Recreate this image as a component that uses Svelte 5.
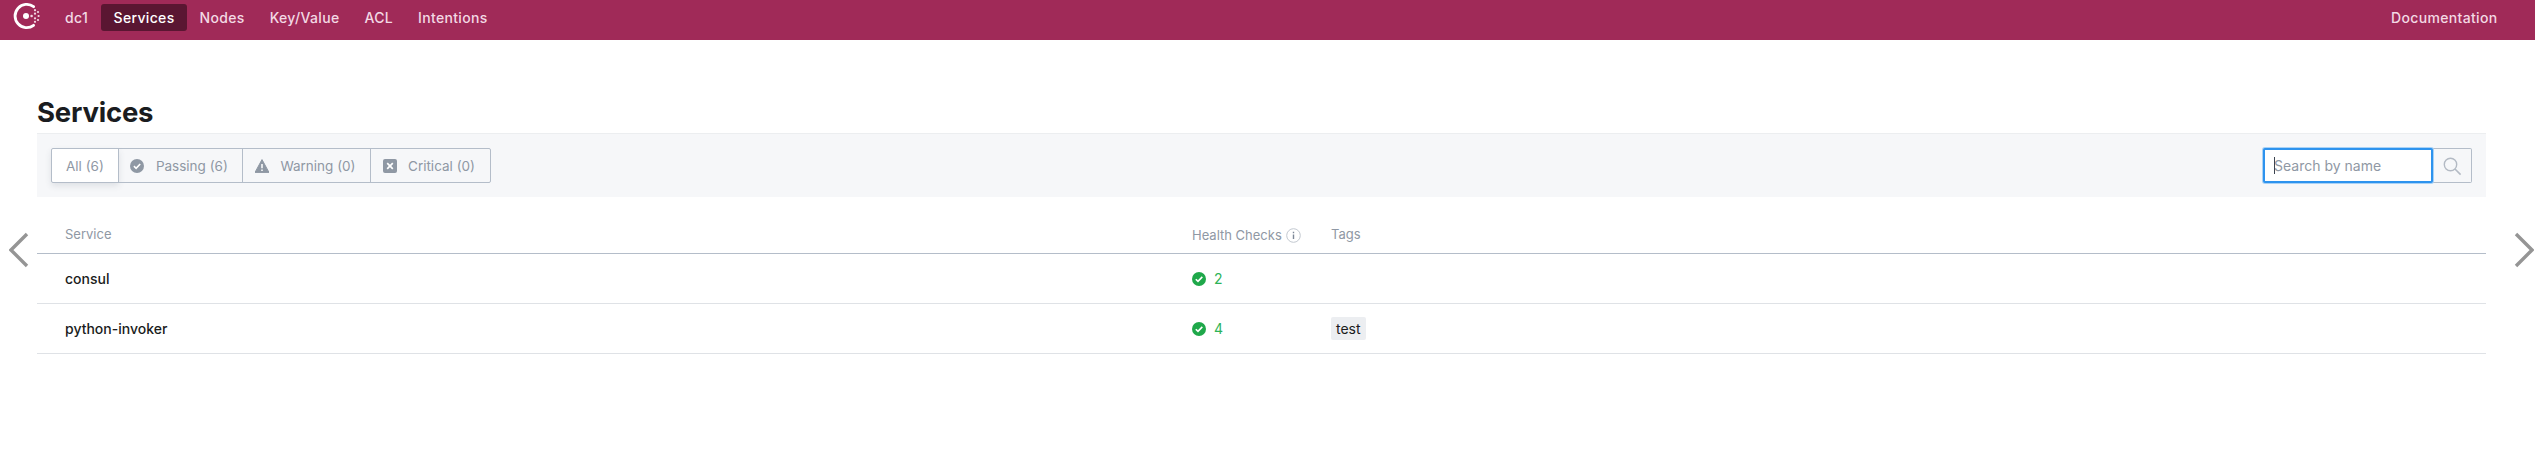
<script>
  const navItems = ['Services', 'Nodes', 'Key/Value', 'ACL', 'Intentions'];
  const filters = [
    { label: 'All (6)', icon: null, active: true },
    { label: 'Passing (6)', icon: 'passing' },
    { label: 'Warning (0)', icon: 'warning' },
    { label: 'Critical (0)', icon: 'critical' }
  ];
  const services = [
    { name: 'consul', checks: 2, tags: [] },
    { name: 'python-invoker', checks: 4, tags: ['test'] }
  ];
</script>

<header class="topbar">
  <svg class="logo" viewBox="0 0 28 28" width="28" height="28" aria-hidden="true">
    <path d="M20.6 3.7A11.6 11.6 0 1 0 20.6 22.3" fill="none" stroke="#fff" stroke-width="2.8" stroke-linecap="round" />
    <circle cx="13" cy="13" r="3" fill="#fff" />
    <circle cx="18.6" cy="13" r="1.3" fill="#f3d9e4" />
    <circle cx="22" cy="7.2" r="1.1" fill="#f3d9e4" />
    <circle cx="25" cy="9" r="1.1" fill="#f3d9e4" />
    <circle cx="22" cy="10.7" r="1.1" fill="#f3d9e4" />
    <circle cx="25.6" cy="13" r="1.1" fill="#f3d9e4" />
    <circle cx="22" cy="15.3" r="1.1" fill="#f3d9e4" />
    <circle cx="25" cy="17" r="1.1" fill="#f3d9e4" />
    <circle cx="22" cy="18.8" r="1.1" fill="#f3d9e4" />
  </svg>
  <span class="dc">dc1</span>
  <nav class="nav">
    {#each navItems as item, i}
      <a class="nav-link" class:current={i === 0} href="#top">{item}</a>
    {/each}
  </nav>
  <a class="nav-link docs" href="#top">Documentation</a>
</header>

<main class="content">
  <h1>Services</h1>

  <div class="filter-bar">
    <div class="filters">
      {#each filters as f}
        <button class="filter" class:active={f.active}>
          {#if f.icon === 'passing'}
            <svg viewBox="0 0 14 14" width="14" height="14" aria-hidden="true">
              <circle cx="7" cy="7" r="7" fill="#8f98a4" />
              <path d="M3.9 7.2 6.1 9.3 10.2 5" fill="none" stroke="#fff" stroke-width="1.6" />
            </svg>
          {:else if f.icon === 'warning'}
            <svg viewBox="0 0 14 14" width="14" height="14" aria-hidden="true">
              <path d="M7 .6 14 13.4H0Z" fill="#8f98a4" stroke="#8f98a4" stroke-linejoin="round" />
              <path d="M7 5v4.2M7 10.4v1.5" stroke="#fff" stroke-width="1.5" />
            </svg>
          {:else if f.icon === 'critical'}
            <svg viewBox="0 0 14 14" width="14" height="14" aria-hidden="true">
              <rect width="14" height="14" rx="2" fill="#8f98a4" />
              <path d="M4.2 4.2 9.8 9.8M9.8 4.2 4.2 9.8" stroke="#fff" stroke-width="1.7" />
            </svg>
          {/if}
          <span>{f.label}</span>
        </button>
      {/each}
    </div>

    <div class="search">
      <div class="search-input"><i class="caret"></i><span>Search by name</span></div>
      <button class="search-btn" aria-label="Search">
        <svg viewBox="0 0 20 20" width="20" height="20" aria-hidden="true">
          <circle cx="8.5" cy="8.5" r="6.2" fill="none" stroke="#b3bac4" stroke-width="1.4" />
          <path d="M13 13l5.6 5.6" stroke="#b3bac4" stroke-width="1.6" />
        </svg>
      </button>
    </div>
  </div>

  <section class="table">
    <div class="row head">
      <span>Service</span>
      <span class="hc">
        Health Checks
        <svg viewBox="0 0 15 15" width="15" height="15" aria-hidden="true">
          <circle cx="7.5" cy="7.5" r="6.8" fill="none" stroke="#c2c8d0" />
          <path d="M7.5 6.4v4.6M7.5 3.8v1.4" stroke="#7c8797" stroke-width="1.4" />
        </svg>
      </span>
      <span>Tags</span>
    </div>
    {#each services as s}
      <div class="row">
        <span class="name">{s.name}</span>
        <span class="checks">
          <svg viewBox="0 0 14 14" width="14" height="14" aria-hidden="true">
            <circle cx="7" cy="7" r="7" fill="#1fa84a" />
            <path d="M3.8 7.2 6 9.4 10.3 4.9" fill="none" stroke="#fff" stroke-width="1.6" />
          </svg>
          {s.checks}
        </span>
        <span class="tags">
          {#each s.tags as tag}<span class="tag">{tag}</span>{/each}
        </span>
      </div>
    {/each}
  </section>
</main>

<svg class="chevron left" viewBox="0 0 20 36" width="20" height="36" aria-hidden="true">
  <path d="M18 2 2 18 18 34" fill="none" stroke="#959595" stroke-width="3.4" />
</svg>
<svg class="chevron right" viewBox="0 0 20 36" width="20" height="36" aria-hidden="true">
  <path d="M2 2 18 18 2 34" fill="none" stroke="#959595" stroke-width="3.4" />
</svg>

<style>
  :global(body) {
    margin: 0;
    background: #fff;
    font-family: Inter, "Liberation Sans", sans-serif;
  }

  .topbar {
    display: flex;
    align-items: center;
    height: 40px;
    padding: 0 25px 0 13px;
    background: #a02a58;
    font-size: 14px;
    font-weight: 500;
    letter-spacing: 0.33px;
  }

  .logo {
    flex-shrink: 0;
    margin-top: -6px;
  }

  .dc {
    margin: -6px 0 0 24px;
    color: #f3d9e4;
  }

  .nav {
    display: flex;
    margin: -6px 0 0 13px;
  }

  .nav-link {
    padding: 5px 12.5px;
    border-radius: 3px;
    color: #f3d9e4;
    text-decoration: none;
    line-height: 17px;
  }

  .nav-link.current {
    background: #5a1632;
    color: #fff;
  }

  .docs {
    margin: -6px 0 0 auto;
  }

  .content {
    padding: 0 49px 0 37px;
  }

  h1 {
    margin: 54px 0 0;
    height: 39px;
    color: #1a1c20;
    font-size: 27.5px;
    line-height: 36px;
    font-weight: 700;
    letter-spacing: -0.2px;
  }

  .filter-bar {
    display: flex;
    justify-content: space-between;
    align-items: center;
    height: 63px;
    padding: 0 14px;
    border-top: 1px solid #eceef0;
    background: #f6f7f9;
  }

  .filters,
  .search {
    display: flex;
    height: 35px;
  }

  .filter {
    display: flex;
    align-items: center;
    gap: 11.5px;
    box-sizing: border-box;
    height: 35px;
    padding: 0 14.5px 0 11.5px;
    margin-left: -1px;
    border: 1px solid #b4bdc9;
    background: transparent;
    color: #8f98a4;
    font: 13.5px Inter, "Liberation Sans", sans-serif;
  }

  .filter:first-child {
    margin-left: 0;
    border-radius: 2px 0 0 2px;
  }

  .filter:last-child {
    border-radius: 0 2px 2px 0;
  }

  .filter.active {
    padding: 0 14px;
    background: #fff;
    box-shadow: 0 3px 6px rgba(60, 70, 90, 0.12);
  }

  .search-input {
    position: relative;
    display: flex;
    align-items: center;
    box-sizing: border-box;
    width: 170px;
    padding-left: 9px;
    border: 2px solid #2e93ee;
    border-radius: 2px;
    box-shadow: 0 0 0 1px #a9d2f6;
    background: #fff;
    color: #8f98a4;
    font-size: 14px;
  }

  .caret {
    position: absolute;
    left: 9px;
    top: 7px;
    width: 1px;
    height: 17px;
    background: #3b4350;
  }

  .search-btn {
    display: flex;
    align-items: center;
    justify-content: center;
    box-sizing: border-box;
    width: 39px;
    padding: 0;
    border: 1px solid #b4bdc9;
    border-left: 0;
    border-radius: 0 2px 2px 0;
    background: transparent;
  }

  .table {
    margin-top: 23px;
  }

  .row {
    display: grid;
    grid-template-columns: 1127px 139px 1fr;
    align-items: center;
    height: 49px;
    padding: 0 0 0 28px;
    border-bottom: 1px solid #dfe2e6;
    color: #1a1c20;
    font-size: 14px;
  }

  .row.head {
    box-sizing: border-box;
    height: 34px;
    padding-top: 6px;
    align-items: start;
    border-bottom: 1px solid #b4bdc9;
    color: #8f98a4;
    font-size: 13px;
    line-height: 17px;
  }

  .hc {
    display: flex;
    align-items: center;
    gap: 4px;
    padding-top: 1px;
  }

  .name {
    font-weight: 500;
  }

  .checks {
    display: flex;
    align-items: center;
    gap: 8px;
    color: #2eb358;
  }

  .tag {
    display: inline-block;
    padding: 3px 5px;
    border-radius: 2px;
    background: #eceef1;
    line-height: 17px;
  }

  .chevron {
    position: absolute;
    top: 232px;
  }

  .chevron.left {
    left: 9px;
  }

  .chevron.right {
    left: 2514px;
  }
</style>
